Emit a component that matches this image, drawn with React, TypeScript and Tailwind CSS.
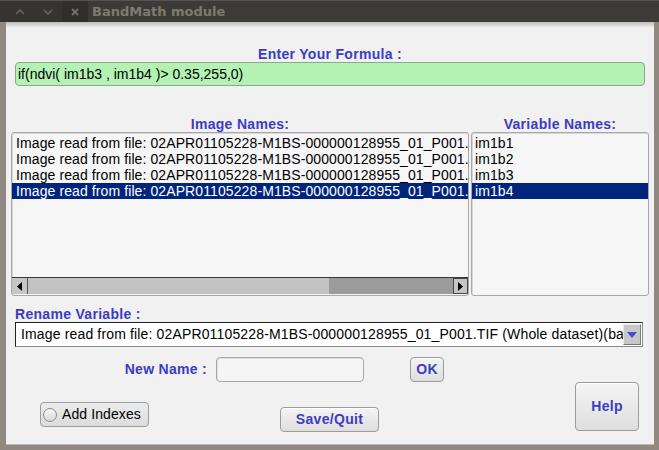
import React from "react";

const blue = "text-[#3c3cc0]";
const font = { fontFamily: '"Liberation Sans", Arial, sans-serif' };

const rowText = "Image read from file: 02APR01105228-M1BS-000000128955_01_P001.";
const vars = ["im1b1", "im1b2", "im1b3", "im1b4"];

function Btn({ className, children }: { className: string; children: React.ReactNode }) {
  return (
    <div
      className={`flex items-center justify-center rounded-[4px] border border-[#9c9c9c] bg-gradient-to-b from-[#f4f4f4] to-[#dedede] shadow-[inset_0_1px_0_#fff] text-[14px] font-bold tracking-[0.3px] ${blue} ${className}`}
    >
      {children}
    </div>
  );
}

export default function App() {
  return (
    <div className="w-[659px] h-[450px] bg-[#8f897f] flex flex-col overflow-hidden select-none" style={font}>
      {/* title bar */}
      <div className="h-[22px] shrink-0 bg-[#3c3b37] border-t border-[#55534e] flex items-center">
        <div className="flex items-center h-full pl-[6px] bg-[#353430]">
          <span className="w-[28px] flex justify-center">
            <svg width="10" height="6" viewBox="0 0 10 6"><path d="M1 5 L5 1 L9 5" stroke="#6d6b64" strokeWidth="1.4" fill="none" /></svg>
          </span>
          <span className="w-[28px] flex justify-center">
            <svg width="10" height="6" viewBox="0 0 10 6"><path d="M1 1 L5 5 L9 1" stroke="#6d6b64" strokeWidth="1.4" fill="none" /></svg>
          </span>
          <span className="w-[26px] h-full flex items-center justify-center bg-[#2f2e2b]">
            <svg width="8" height="8" viewBox="0 0 8 8"><path d="M1 1 L7 7 M7 1 L1 7" stroke="#75736c" strokeWidth="1.8" /></svg>
          </span>
        </div>
        <span className="ml-[4px] text-[13px] font-bold text-[#7c7a71]" style={{ fontFamily: '"DejaVu Sans", "Liberation Sans", sans-serif' }}>
          BandMath module
        </span>
      </div>

      {/* body */}
      <div className="flex-1 ml-[6px] mr-[5px] mb-[5px] bg-[#f1f1f1] border-b border-[#b8b8b8] flex flex-col relative tracking-[0.1px]">
        <div className="absolute left-0 right-0 top-0 h-[6px] bg-gradient-to-b from-[#bdbdbd] to-transparent" />

        <div className={`mt-[24px] h-[16px] leading-[16px] text-center text-[14px] font-bold tracking-[0.3px] ${blue}`}>Enter Your Formula :</div>

        <div className="ml-[9px] w-[630px] h-[24px] rounded-[4px] border border-[#8ca88c] bg-[#b4f2b4] flex items-center pl-[2px] text-[14px] text-black tracking-normal">
          <span>if(ndvi( im1b3 , im1b4 )&gt; 0.35,255,0)</span>
        </div>

        <div className={`mt-[30px] h-[16px] leading-[16px] flex text-[14px] font-bold tracking-[0.3px] ${blue}`}>
          <div className="ml-[5px] w-[458px] text-center">Image Names:</div>
          <div className="ml-[2px] w-[178px] text-center">Variable Names:</div>
        </div>

        <div className="flex h-[164px] ml-[5px]">
          <div className="w-[458px] h-full rounded-[3px] border border-[#a8a8a8] bg-[#f6f6f6] flex flex-col overflow-hidden shadow-[inset_1px_1px_0_#d8d8d8]">
            <div className="flex-1 pt-[2px]">
              {[0, 1, 2, 3].map((i) => (
                <div
                  key={i}
                  className={`h-[16px] leading-[16px] pl-[4px] text-[14px] whitespace-nowrap overflow-hidden ${i === 3 ? "bg-[#01257d] text-white" : "text-black"}`}
                >
                  {rowText}
                </div>
              ))}
            </div>
            <div className="h-[17px] flex border-t border-[#3a3a3a] mb-[1px]">
              <div className="w-[16px] h-full bg-[#c6c6c6] border-r border-[#555] flex items-center justify-center">
                <svg width="5" height="9" viewBox="0 0 5 9"><path d="M5 0 L0 4.5 L5 9 Z" fill="#000" /></svg>
              </div>
              <div className="w-[302px] h-full bg-[#c2c2c2] border-r border-[#9a9a9a]" />
              <div className="flex-1 h-full bg-[#9b9b9b]" />
              <div className="w-[15px] h-full bg-[#c6c6c6] border border-[#444] flex items-center justify-center">
                <svg width="5" height="9" viewBox="0 0 5 9"><path d="M0 0 L5 4.5 L0 9 Z" fill="#000" /></svg>
              </div>
            </div>
          </div>
          <div className="ml-[2px] w-[178px] h-full rounded-[3px] border border-[#a8a8a8] bg-[#f6f6f6] pt-[2px] shadow-[inset_1px_1px_0_#d8d8d8]">
            {vars.map((v, i) => (
              <div
                key={v}
                className={`h-[16px] leading-[16px] pl-[3px] text-[14px] ${i === 3 ? "bg-[#01257d] text-white" : "text-black"}`}
              >
                {v}
              </div>
            ))}
          </div>
        </div>

        <div className={`mt-[10px] ml-[9px] h-[16px] leading-[16px] text-[14px] font-bold tracking-[0.3px] ${blue}`}>Rename Variable :</div>

        <div className="ml-[9px] w-[628px] h-[25px] bg-white border border-[#222] border-b-[#8a8a8a] border-r-[#8a8a8a] flex items-center">
          <div className="flex-1 pl-[5px] text-[14px] text-black whitespace-nowrap overflow-hidden tracking-[0.15px]">
            Image read from file: 02APR01105228-M1BS-000000128955_01_P001.TIF (Whole dataset)(ba
          </div>
          <div className="w-[18px] h-[21px] mr-[1px] bg-[#c8c8c8] border border-[#e8e8e8] border-b-[#7a7a7a] border-r-[#7a7a7a] flex items-center justify-center">
            <svg width="10" height="6" viewBox="0 0 10 6"><path d="M0 0 L10 0 L5 6 Z" fill="#4646e0" /></svg>
          </div>
        </div>

        <div className="mt-[10px] flex">
          <div className="w-[569px] flex flex-col">
            <div className="flex items-center h-[25px]">
              <div className={`w-[201px] text-right text-[14px] font-bold tracking-[0.3px] ${blue}`}>New Name :</div>
              <div className="ml-[9px] w-[148px] h-[25px] rounded-[4px] border border-[#a6a6a6] bg-[#f5f5f5] shadow-[inset_1px_1px_0_#e0e0e0]" />
              <Btn className="ml-[46px] w-[34px] h-[25px]">OK</Btn>
            </div>
            <div className="flex mt-[20px]">
              <div className="ml-[34px] w-[109px] h-[25px] rounded-[4px] border border-[#9c9c9c] bg-gradient-to-b from-[#ececec] to-[#dcdcdc] flex items-center text-[14px] text-black">
                <div className="ml-[2px] w-[14px] h-[14px] rounded-full border border-[#8a8a8a] bg-gradient-to-b from-[#f8f8f8] to-[#d8d8d8]" />
                <span className="ml-[5px]">Add Indexes</span>
              </div>
              <Btn className="mt-[5px] ml-[131px] w-[99px] h-[25px]">Save/Quit</Btn>
            </div>
          </div>
          <Btn className="mt-[25px] w-[64px] h-[49px]">Help</Btn>
        </div>
      </div>
    </div>
  );
}
